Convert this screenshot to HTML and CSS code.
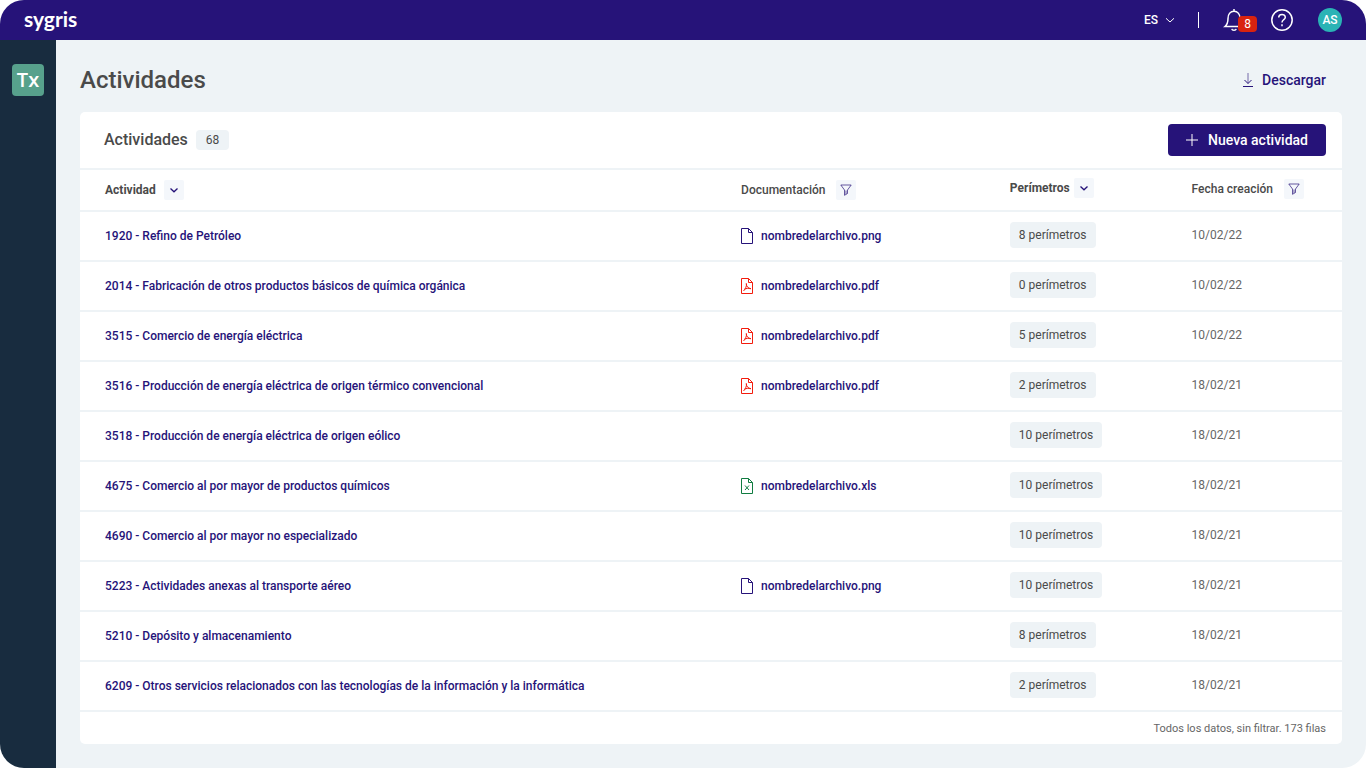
FILE: index.html
```
<!DOCTYPE html>
<html lang="es">
<head>
<meta charset="utf-8">
<meta name="viewport" content="width=device-width, initial-scale=1">
<title>Sygris - Actividades</title>
<link rel="stylesheet" href="styles.css">
</head>
<body>
<svg class="sprite" aria-hidden="true">
  <symbol id="chevron" viewBox="0 0 12 12"><path d="M2.500 4.500 6 7.800l3.500-3.300"/></symbol>
  <symbol id="filter" viewBox="0 0 12 12"><path d="M.8 1h10.400L7.500 6v3.500L4.500 11.300V6z"/><path d="M6 6.500v3.500"/></symbol>
  <symbol id="file" viewBox="0 0 14 16"><path d="M1.500.5h7L12.500 4.500v11h-11zM8.500.5v4h4"/></symbol>
  <symbol id="file-pdf" viewBox="0 0 14 16"><path d="M1.500.5h7L12.500 4.500v11h-11zM8.500.5v4h4"/><path d="M6.300 5.500C7 7.500 5.500 11 3.500 13M6.300 5.500c0 3 2 5 4.700 5.200M4.300 11.300c2-1 4-1.300 6.700-.6"/></symbol>
  <symbol id="file-xls" viewBox="0 0 14 16"><path d="M1.500.5h7L12.500 4.500v11h-11zM8.500.5v4h4"/><path d="m5 7.500 4 4.500M9 7.500 5 12"/></symbol>
</svg>
<div class="app">
  <header class="topbar">
    <a class="logo" href="#">sygris</a>
    <div class="tools">
      <button class="lang" type="button">ES <svg class="icon" viewBox="0 0 12 12"><path d="M2 4.300 6 8l4-3.700"/></svg></button>
      <span class="divider"></span>
      <button class="bell" type="button" aria-label="Notificaciones">
        <svg class="icon-large" viewBox="0 0 24 24"><path d="M3 18.500h18c-2.300-2-3-3.500-3-8C18 6 15.500 3.200 12 3.200S6 6 6 10.500c0 4.500-.7 6-3 8zM12 3.200V1M9.800 20.800c.4 2 4 2 4.400 0"/></svg>
        <span class="count">8</span>
      </button>
      <button class="help" type="button" aria-label="Ayuda">
        <svg class="icon-large" viewBox="0 0 24 24"><circle cx="12" cy="12" r="10.200"/><path d="M8.700 9.500c0-4.200 6.600-4 6.600-.3 0 2.600-3.300 2.300-3.300 5.300M12 16.300v2"/></svg>
      </button>
      <button class="avatar" type="button">AS</button>
    </div>
  </header>
  <div class="body">
    <nav class="sidebar"><a class="module" href="#">Tx</a></nav>
    <main class="content">
      <div class="heading">
        <h1>Actividades</h1>
        <button class="download" type="button"><svg class="icon-arrow" viewBox="0 0 12 16"><path class="soft" d="M6 1v10.500"/><path d="M2.500 8 6 11.500 9.500 8M1 14.500h10"/></svg>Descargar</button>
      </div>
      <section class="card">
        <div class="card-head">
          <h2>Actividades</h2><span class="total">68</span>
          <button class="create" type="button"><svg class="icon" viewBox="0 0 12 12"><path d="M6 0v12M0 6h12"/></svg>Nueva actividad</button>
        </div>
        <table>
          <colgroup><col class="col-name"><col class="col-doc"><col class="col-per"><col class="col-date"></colgroup>
          <thead><tr>
            <th><span class="label"><b>Actividad</b><button class="tool" type="button" aria-label="Ordenar por actividad"><svg class="icon sort"><use href="#chevron"/></svg></button></span></th>
            <th><span class="label wide">Documentación<button class="tool" type="button" aria-label="Filtrar documentación"><svg class="icon thin"><use href="#filter"/></svg></button></span></th>
            <th class="per"><span class="label"><b>Perímetros</b><button class="tool" type="button" aria-label="Ordenar por perímetros"><svg class="icon sort"><use href="#chevron"/></svg></button></span></th>
            <th class="date"><span class="label wide">Fecha creación<button class="tool" type="button" aria-label="Filtrar fecha"><svg class="icon thin"><use href="#filter"/></svg></button></span></th>
          </tr></thead>
          <tbody>
            <tr><td><a href="#">1920 - Refino de Petróleo</a></td><td><a class="doc" href="#"><svg class="icon-file"><use href="#file"/></svg>nombredelarchivo.png</a></td><td class="per"><span class="pill">8 perímetros</span></td><td class="date">10/02/22</td></tr>
            <tr><td><a href="#">2014 - Fabricación de otros productos básicos de química orgánica</a></td><td><a class="doc" href="#"><svg class="icon-file pdf"><use href="#file-pdf"/></svg>nombredelarchivo.pdf</a></td><td class="per"><span class="pill">0 perímetros</span></td><td class="date">10/02/22</td></tr>
            <tr><td><a href="#">3515 - Comercio de energía eléctrica</a></td><td><a class="doc" href="#"><svg class="icon-file pdf"><use href="#file-pdf"/></svg>nombredelarchivo.pdf</a></td><td class="per"><span class="pill">5 perímetros</span></td><td class="date">10/02/22</td></tr>
            <tr><td><a href="#">3516 - Producción de energía eléctrica de origen térmico convencional</a></td><td><a class="doc" href="#"><svg class="icon-file pdf"><use href="#file-pdf"/></svg>nombredelarchivo.pdf</a></td><td class="per"><span class="pill">2 perímetros</span></td><td class="date">18/02/21</td></tr>
            <tr><td><a href="#">3518 - Producción de energía eléctrica de origen eólico</a></td><td></td><td class="per"><span class="pill">10 perímetros</span></td><td class="date">18/02/21</td></tr>
            <tr><td><a href="#">4675 - Comercio al por mayor de productos químicos</a></td><td><a class="doc" href="#"><svg class="icon-file xls"><use href="#file-xls"/></svg>nombredelarchivo.xls</a></td><td class="per"><span class="pill">10 perímetros</span></td><td class="date">18/02/21</td></tr>
            <tr><td><a href="#">4690 - Comercio al por mayor no especializado</a></td><td></td><td class="per"><span class="pill">10 perímetros</span></td><td class="date">18/02/21</td></tr>
            <tr><td><a href="#">5223 - Actividades anexas al transporte aéreo</a></td><td><a class="doc" href="#"><svg class="icon-file"><use href="#file"/></svg>nombredelarchivo.png</a></td><td class="per"><span class="pill">10 perímetros</span></td><td class="date">18/02/21</td></tr>
            <tr><td><a href="#">5210 - Depósito y almacenamiento</a></td><td></td><td class="per"><span class="pill">8 perímetros</span></td><td class="date">18/02/21</td></tr>
            <tr><td><a href="#">6209 - Otros servicios relacionados con las tecnologías de la información y la informática</a></td><td></td><td class="per"><span class="pill">2 perímetros</span></td><td class="date">18/02/21</td></tr>
          </tbody>
        </table>
        <p class="card-foot">Todos los datos, sin filtrar. 173 filas</p>
      </section>
    </main>
  </div>
</div>
</body>
</html>
```
FILE: styles.css
```
* { box-sizing: border-box; }
body { margin: 0; background: #fff; color: #4a4a4a; font: 12px/16px Roboto, "Noto Sans", sans-serif; }
a { color: #261379; text-decoration: none; }
button { margin: 0; padding: 0; border: 0; background: none; color: inherit; font: inherit; cursor: pointer; }
svg { fill: none; stroke: currentColor; flex: none; }
.sprite { display: none; }
.icon { width: 12px; height: 12px; }
.sort { stroke-width: 1.3; }
.thin { stroke-width: 0.7; }
.soft { opacity: 0.6; }
.icon-large { width: 24px; height: 24px; stroke-width: 1.5; }
.icon-arrow { width: 12px; height: 16px; }
.icon-file { width: 14px; height: 16px; }
.pdf { color: #f21c0d; }
.xls { color: #107c41; }

.app { display: flex; flex-direction: column; min-height: 100vh; border-radius: 24px; overflow: hidden; background: #eef3f6; }
.topbar { display: flex; align-items: center; justify-content: space-between; height: 40px; padding: 0 24px; background: #261379; color: #fff; }
.logo { padding-bottom: 2px; color: #fff; font: 700 21px/24px Lato, sans-serif; }
.tools { display: flex; align-items: center; }
.lang { display: flex; align-items: center; gap: 6px; font-weight: 500; }
.divider { width: 1px; height: 16px; margin: 0 23px 0 22px; background: #fff; }
.bell { position: relative; display: flex; }
.count { position: absolute; left: 16px; top: 8px; width: 19px; border-radius: 4px; background: #d9230f; text-align: center; }
.help { display: flex; margin: 0 24px; }
.avatar { width: 24px; height: 24px; border-radius: 50%; background: #2ab3b5; font-weight: 500; }

.body { display: flex; flex: 1; }
.sidebar { flex: none; width: 56px; padding: 24px 12px; background: #182c3f; }
.module { display: block; border-radius: 4px; background: #57a18c; color: #fff; font: 600 20px/32px "Open Sans", sans-serif; text-align: center; }
.content { flex: 1; min-width: 0; padding: 24px; }
.heading { display: flex; align-items: center; justify-content: space-between; margin-bottom: 16px; padding-right: 16px; }
h1 { margin: 0; font-size: 24px; line-height: 32px; font-weight: 500; }
.download { display: flex; align-items: center; gap: 8px; color: #261379; font-size: 14px; font-weight: 500; }

.card { border-radius: 5px; background: #fff; }
.card-head { display: flex; align-items: center; height: 56px; padding: 0 16px 0 24px; }
h2 { margin: 0; font-size: 16px; line-height: 24px; font-weight: 500; }
.total { margin-left: 8px; padding: 0 10px; border-radius: 4px; background: #eef3f6; line-height: 20px; }
.create { display: flex; align-items: center; gap: 10px; height: 32px; margin-left: auto; padding: 0 18px; border-radius: 4px; background: #261379; color: #fff; font-size: 14px; font-weight: 500; }
table { width: 100%; table-layout: fixed; border-spacing: 0; border-bottom: 2px solid #eef3f6; }
.col-name { width: 50.4%; }
.col-doc { width: 21.3%; }
.col-per { width: 14.4%; }
th, td { padding: 0 0 0 25px; border-top: 2px solid #eef3f6; text-align: left; }
th { height: 42px; font-weight: 500; }
td { height: 50px; }
td a { font-weight: 500; }
b { font-weight: 700; }
.label { display: flex; align-items: center; gap: 8px; }
.wide { gap: 11px; }
.tool { display: grid; place-items: center; width: 20px; height: 20px; border-radius: 2px; background: #f4f7fb; color: #261379; }
.doc { display: flex; align-items: center; gap: 7px; margin-left: -1px; }
td.per, .date { padding-bottom: 2px; }
th.per { padding-bottom: 4px; }
th.per .label { gap: 4px; }
td.date { color: #666; }
.pill { display: inline-block; padding: 0 9px; border-radius: 4px; background: #eef3f6; line-height: 26px; vertical-align: middle; }
.card-foot { margin: 0; padding: 9px 16px 7px; color: #666; font-size: 11px; text-align: right; }
```
